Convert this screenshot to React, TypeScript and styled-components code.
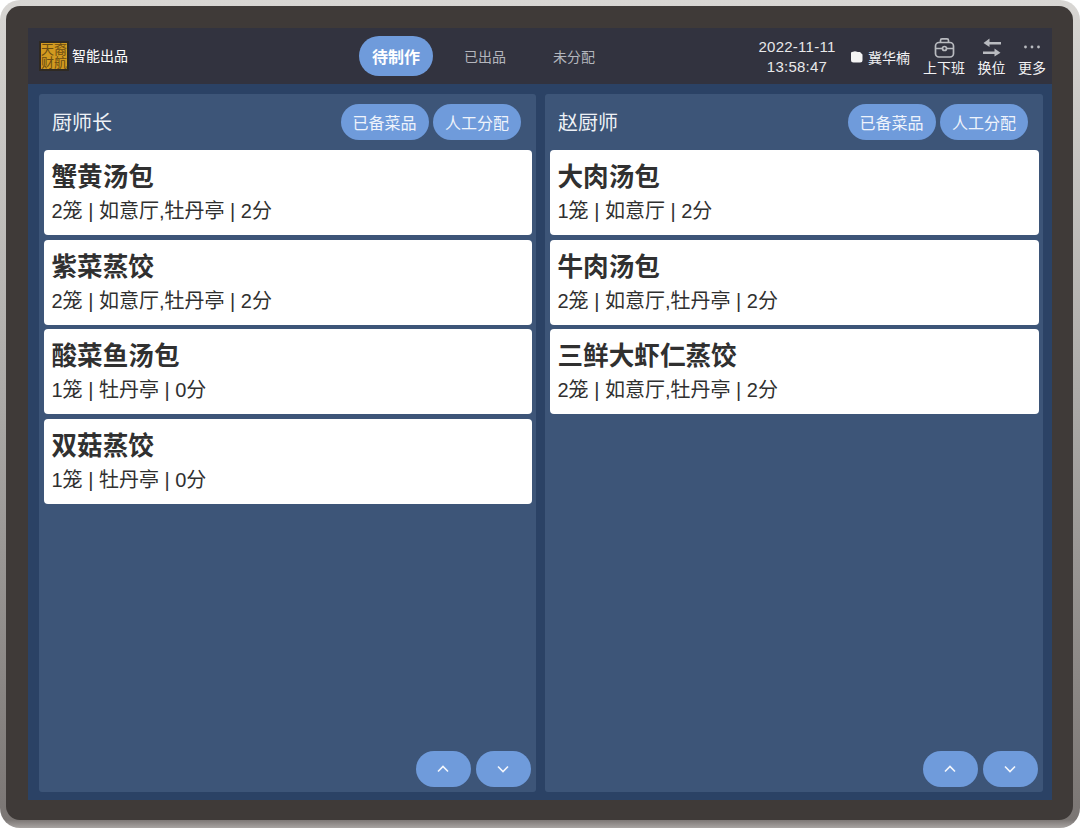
import React from "react";
import styled, { createGlobalStyle } from "styled-components";

const GlobalStyle = createGlobalStyle`
  html, body { margin: 0; padding: 0; background: #fff; }
  body { font-family: "Liberation Sans", "Noto Sans CJK SC", sans-serif; }
  * { box-sizing: border-box; }
`;

type Dish = { name: string; info: string };
type Chef = { name: string; dishes: Dish[] };

const chefs: Chef[] = [
  {
    name: "厨师长",
    dishes: [
      { name: "蟹黄汤包", info: "2笼 | 如意厅,牡丹亭 | 2分" },
      { name: "紫菜蒸饺", info: "2笼 | 如意厅,牡丹亭 | 2分" },
      { name: "酸菜鱼汤包", info: "1笼 | 牡丹亭 | 0分" },
      { name: "双菇蒸饺", info: "1笼 | 牡丹亭 | 0分" },
    ],
  },
  {
    name: "赵厨师",
    dishes: [
      { name: "大肉汤包", info: "1笼 | 如意厅 | 2分" },
      { name: "牛肉汤包", info: "2笼 | 如意厅,牡丹亭 | 2分" },
      { name: "三鲜大虾仁蒸饺", info: "2笼 | 如意厅,牡丹亭 | 2分" },
    ],
  },
];

const Frame = styled.div`
  width: 1080px;
  height: 828px;
  padding: 6px 7px 8px 6px;
  border-radius: 20px;
  background: linear-gradient(180deg, #d8d6d3 0%, #aaa8a6 50%, #7b7674 99%, #a8a4a2 100%);
`;

const Bezel = styled.div`
  height: 100%;
  padding: 22px 21px 20px 22px;
  border-radius: 14px;
  background: #3f3a38;
`;

const Screen = styled.div`
  height: 100%;
  display: flex;
  flex-direction: column;
  background: #2b4265;
`;

const TopBar = styled.header`
  height: 56px;
  flex: none;
  display: grid;
  grid-template-columns: 320px auto 1fr;
  align-items: center;
  padding: 0 6px 0 11px;
  background: #32333f;
  color: #fff;
`;

const Brand = styled.div`
  display: flex;
  align-items: center;
  gap: 3px;
  font-size: 14px;

  > span {
    margin-top: -3px;
  }
`;

const Logo = styled.div`
  width: 30px;
  height: 30px;
  display: grid;
  grid-template-columns: 1fr 1fr;
  place-items: center;
  border: 2px solid #2f2a24;
  background: #d29a20;
  color: #6b4c12;
  font-size: 13px;
  line-height: 13px;
`;

const Tabs = styled.nav`
  display: flex;
  align-items: center;
  gap: 15px;
`;

const Tab = styled.div<{ $active?: boolean }>`
  width: 74px;
  height: 40px;
  display: flex;
  align-items: center;
  justify-content: center;
  border-radius: 20px;
  font-size: ${(p) => (p.$active ? "16px" : "14px")};
  font-weight: ${(p) => (p.$active ? 700 : 400)};
  color: ${(p) => (p.$active ? "#fff" : "#b4b6bd")};
  background: ${(p) => (p.$active ? "#6f9bdb" : "transparent")};
`;

const Status = styled.div`
  display: flex;
  align-items: center;
  justify-content: flex-end;
`;

const Clock = styled.div`
  width: 84px;
  text-align: center;
  font-size: 15px;
  letter-spacing: 0.25px;
  line-height: 20px;
  color: #e8e8ea;
  margin-top: 2px;
`;

const User = styled.div`
  display: flex;
  align-items: center;
  gap: 5px;
  margin: 2px 13px 0 11px;
  font-size: 14px;
  color: #f0f0f2;
`;

const ToolList = styled.div`
  display: flex;
  align-items: center;
  gap: 12.5px;
`;

const Tool = styled.div`
  display: flex;
  flex-direction: column;
  align-items: center;
  font-size: 14px;
  line-height: 18px;
  padding-top: 1px;
  color: #f2f2f4;

  svg {
    display: block;
    height: 22px;
  }
`;

const Board = styled.main`
  flex: 1;
  min-height: 0;
  display: grid;
  grid-template-columns: 497px 498px;
  gap: 9px;
  padding: 10px 9px 8px 11px;
`;

const Panel = styled.section`
  display: flex;
  flex-direction: column;
  padding: 0 4.5px 5px;
  border-radius: 3px;
  background: #3d5578;
`;

const PanelHead = styled.div`
  height: 56px;
  flex: none;
  display: flex;
  align-items: center;
  justify-content: space-between;
  padding: 0 10.5px 0 8.5px;
`;

const ChefName = styled.h2`
  margin: -1px 0 0;
  font-size: 20px;
  font-weight: 400;
  color: #eef1f6;
`;

const ButtonRow = styled.div`
  display: flex;
  gap: 4.5px;
`;

const Pill = styled.button`
  width: 88px;
  height: 36px;
  padding: 0;
  border: 0;
  border-radius: 18px;
  background: #6f9bdb;
  color: #eef3fb;
  font: inherit;
  font-size: 16px;
`;

const DishList = styled.div`
  flex: 1;
  display: flex;
  flex-direction: column;
  gap: 4.5px;
`;

const Card = styled.article`
  height: 85px;
  padding: 11px 8px 0;
  border-radius: 4px;
  background: #fff;
  color: #303030;
`;

const DishName = styled.div`
  font-size: 25.6px;
  line-height: 33px;
  font-weight: 700;
`;

const DishInfo = styled.div`
  font-size: 20px;
  line-height: 28px;
  margin-top: 3px;
`;

const Pager = styled.div`
  display: flex;
  justify-content: flex-end;
  gap: 4.5px;
  padding-right: 0.5px;
`;

const PageButton = styled(Pill)`
  width: 55.5px;
  display: flex;
  align-items: center;
  justify-content: center;
`;

const Chevron = ({ down }: { down?: boolean }) => (
  <svg width="12" height="8" viewBox="0 0 12 8" fill="none" stroke="#f4f7fc" strokeWidth="1.6">
    <path d={down ? "M1 1.5l5 5 5-5" : "M1 6.5l5-5 5 5"} />
  </svg>
);

const App: React.FC = () => (
  <Frame>
    <GlobalStyle />
    <Bezel>
      <Screen>
        <TopBar>
          <Brand>
            <Logo>
              <span>天</span>
              <span>裔</span>
              <span>财</span>
              <span>航</span>
            </Logo>
            <span>智能出品</span>
          </Brand>
          <Tabs>
            <Tab $active>待制作</Tab>
            <Tab>已出品</Tab>
            <Tab>未分配</Tab>
          </Tabs>
          <Status>
            <Clock>
              <div>2022-11-11</div>
              <div>13:58:47</div>
            </Clock>
            <User>
              <svg width="13" height="12" viewBox="0 0 13 12">
                <path d="M2 1l3-.8L8 1h2l2.5 2.500V9a2.500 2.500 0 0 1-2.500 2.500H3.500A2.500 2.500 0 0 1 1 9V2a1 1 0 0 1 1-1z" fill="#f4f4f4" />
              </svg>
              <span>冀华楠</span>
            </User>
            <ToolList>
              <Tool>
                <svg width="21" height="22" viewBox="0 0 21 22" fill="none" stroke="#b9bbc0" strokeWidth="1.7">
                  <path d="M6.500 5.500V3.400c0-.9.6-1.500 1.500-1.500h5c.9 0 1.500.6 1.500 1.500v2.100" />
                  <rect x="1.500" y="5.500" width="18" height="14.500" rx="3.500" />
                  <path d="M1.500 11.500h6.500M13 11.500h6.500" />
                  <circle cx="10.500" cy="11.500" r="2" />
                </svg>
                <span>上下班</span>
              </Tool>
              <Tool>
                <svg width="18" height="22" viewBox="0 0 18 22" fill="#b9bbc0">
                  <path d="M18 5v2.400H6.500V10L.5 6l6-4.500V5z" />
                  <path d="M0 14.500v2.400h11.500v2.600l6-3.700-6-4.300v3z" />
                </svg>
                <span>换位</span>
              </Tool>
              <Tool>
                <svg width="18" height="22" viewBox="0 0 18 22" fill="#b9bbc0">
                  <circle cx="2.500" cy="10" r="1.400" />
                  <circle cx="9" cy="10" r="1.400" />
                  <circle cx="15.500" cy="10" r="1.400" />
                </svg>
                <span>更多</span>
              </Tool>
            </ToolList>
          </Status>
        </TopBar>
        <Board>
          {chefs.map((chef) => (
            <Panel key={chef.name}>
              <PanelHead>
                <ChefName>{chef.name}</ChefName>
                <ButtonRow>
                  <Pill>已备菜品</Pill>
                  <Pill>人工分配</Pill>
                </ButtonRow>
              </PanelHead>
              <DishList>
                {chef.dishes.map((dish) => (
                  <Card key={dish.name}>
                    <DishName>{dish.name}</DishName>
                    <DishInfo>{dish.info}</DishInfo>
                  </Card>
                ))}
              </DishList>
              <Pager>
                <PageButton aria-label="上一页">
                  <Chevron />
                </PageButton>
                <PageButton aria-label="下一页">
                  <Chevron down />
                </PageButton>
              </Pager>
            </Panel>
          ))}
        </Board>
      </Screen>
    </Bezel>
  </Frame>
);

export default App;
